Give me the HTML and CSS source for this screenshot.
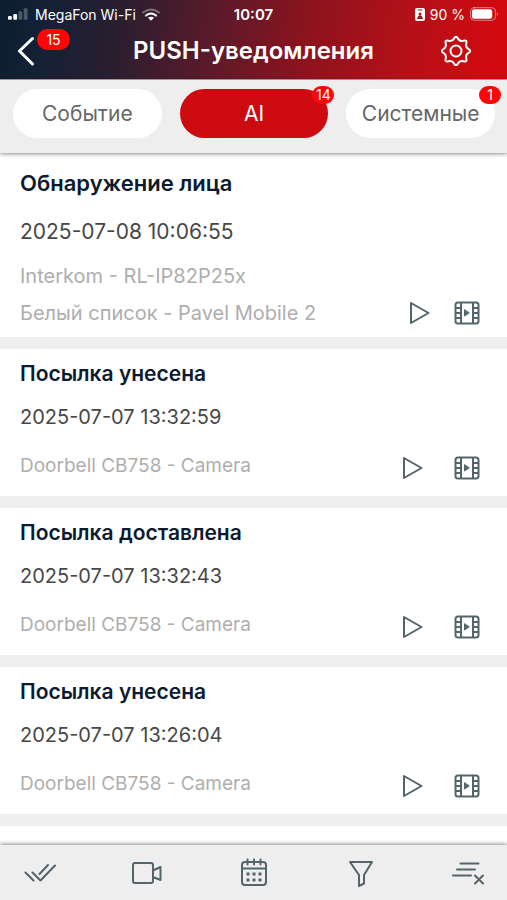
FILE: index.html
```html
<!DOCTYPE html>
<html lang="ru">
<head>
<meta charset="utf-8">
<meta name="viewport" content="width=device-width, initial-scale=1">
<title>PUSH-уведомления</title>
<link rel="stylesheet" href="styles.css">
</head>
<body>
<svg class="sprite" aria-hidden="true">
  <symbol id="play" viewBox="0 0 24 26"><path d="M3 3 20.500 13 3 23Z"/></symbol>
  <symbol id="film" viewBox="0 0 28 26">
    <rect x="2.500" y="2.500" width="23" height="21" rx="2.500"/>
    <path d="M8 3v20M20 3v20M3 8h5M3 13h5M3 18h5M20 8h5M20 13h5M20 18h5"/>
    <path class="solid" d="M11.500 10v6l4.500-3Z"/>
  </symbol>
</svg>
<header class="top">
  <div class="status">
    <div class="carrier">
      <svg class="signal" viewBox="0 0 22 12" aria-hidden="true"><rect y="8" width="4" height="4" rx="1"/><rect x="5.500" y="6" width="4" height="6" rx="1"/><rect class="dim" x="11" y="3" width="4" height="9" rx="1"/><rect class="dim" x="16.500" width="4" height="12" rx="1"/></svg>
      <span>MegaFon Wi-Fi</span>
      <svg class="wifi" viewBox="0 0 18 13" aria-hidden="true"><path class="dim" d="M1 4.500Q9-1.500 17 4.500"/><path d="M4 7.600Q9 3.500 14 7.600"/><path class="dot" d="M6 9.800Q9 7.500 12 9.800L9 12.800Z"/></svg>
    </div>
    <time class="clock">10:07</time>
    <div class="power">
      <svg class="lock" viewBox="0 0 10 13" aria-hidden="true"><rect width="10" height="13" rx="2"/><path d="M3 2h4M2.500 10.500h5"/><circle cx="5" cy="6" r="1.500"/><path class="fill" d="M2.500 10q0-2.500 2.500-2.500t2.500 2.500z"/></svg>
      <span>90 %</span>
      <svg class="battery" viewBox="0 0 30 14" aria-hidden="true"><rect class="shell" x=".5" y=".5" width="26" height="13" rx="4"/><rect x="2" y="2" width="21" height="10" rx="2.500"/><path class="tip" d="M28 5q2 2 0 4z"/></svg>
    </div>
  </div>
  <div class="bar">
    <button class="back" type="button" aria-label="Назад">
      <svg viewBox="0 0 20 30" aria-hidden="true"><path d="M16.500 2.500 3.500 15 16.500 28"/></svg>
      <span class="badge badge-back">15</span>
    </button>
    <h1>PUSH-уведомления</h1>
    <button class="settings" type="button" aria-label="Настройки">
      <svg viewBox="-15 -15 30 30" aria-hidden="true"><path d="M12.600-1.900Q16 0 12.600 1.900Q9.200 3.800 10.300 7.600Q11.300 11.300 7.600 10.300Q3.800 9.200 1.900 12.600Q0 16-1.900 12.600Q-3.800 9.200-7.600 10.300Q-11.300 11.300-10.300 7.600Q-9.200 3.800-12.600 1.900Q-16 0-12.600-1.900Q-9.200-3.800-10.300-7.600Q-11.300-11.300-7.600-10.300Q-3.800-9.200-1.900-12.600Q0-16 1.900-12.600Q3.800-9.200 7.600-10.300Q11.300-11.300 10.300-7.600Q9.200-3.800 12.600-1.900Z"/><circle r="5.500"/></svg>
    </button>
  </div>
</header>
<nav class="tabs">
  <button class="tab" type="button">Событие</button>
  <button class="tab active" type="button">AI<span class="badge badge-count">14</span></button>
  <button class="tab" type="button">Системные<span class="badge badge-count">1</span></button>
</nav>
<main class="list">
  <article class="card latest">
    <h2>Обнаружение лица</h2>
    <time>2025-07-08 10:06:55</time>
    <p>Interkom - RL-IP82P25x</p>
    <div class="source"><p>Белый список - Pavel Mobile 2</p>
      <div class="actions"><button type="button" aria-label="Воспроизвести"><svg class="play"><use href="#play"/></svg></button><button type="button" aria-label="Запись"><svg class="film"><use href="#film"/></svg></button></div></div>
  </article>
  <article class="card">
    <h2>Посылка унесена</h2>
    <time>2025-07-07 13:32:59</time>
    <div class="source"><p>Doorbell CB758 - Camera</p>
      <div class="actions"><button type="button" aria-label="Воспроизвести"><svg class="play"><use href="#play"/></svg></button><button type="button" aria-label="Запись"><svg class="film"><use href="#film"/></svg></button></div></div>
  </article>
  <article class="card">
    <h2>Посылка доставлена</h2>
    <time>2025-07-07 13:32:43</time>
    <div class="source"><p>Doorbell CB758 - Camera</p>
      <div class="actions"><button type="button" aria-label="Воспроизвести"><svg class="play"><use href="#play"/></svg></button><button type="button" aria-label="Запись"><svg class="film"><use href="#film"/></svg></button></div></div>
  </article>
  <article class="card">
    <h2>Посылка унесена</h2>
    <time>2025-07-07 13:26:04</time>
    <div class="source"><p>Doorbell CB758 - Camera</p>
      <div class="actions"><button type="button" aria-label="Воспроизвести"><svg class="play"><use href="#play"/></svg></button><button type="button" aria-label="Запись"><svg class="film"><use href="#film"/></svg></button></div></div>
  </article>
</main>
<footer class="tools">
  <button type="button" aria-label="Прочитать все"><svg viewBox="0 0 32 32"><path d="m1.500 15.500 8 8M8.500 15.500l8 8 14.500-15M15.500 17l8.500-9"/></svg></button>
  <button type="button" aria-label="Камеры"><svg viewBox="0 0 32 32"><rect x="2" y="6" width="20" height="20" rx="2"/><path d="M22 13.500 29.500 10v13L22 20Z"/></svg></button>
  <button type="button" aria-label="Календарь"><svg viewBox="0 0 32 32"><rect x="4" y="5" width="24" height="23" rx="3"/><path d="M4 11.500h24M9.500 2.500v5M16 2.500v5M22.500 2.500v5"/><path class="dots" d="M8.500 17h3M14.500 17h3M20.500 17h3M8.500 23h3M14.500 23h3M20.500 23h3"/></svg></button>
  <button type="button" aria-label="Фильтр"><svg viewBox="0 0 32 32"><path d="M5 5h22l-8 13v8.500L14 29V18Z"/></svg></button>
  <button type="button" aria-label="Очистить список"><svg viewBox="0 0 32 32"><path d="M8.500 6.500h18M5 12.500h18M1 18.500h18M23 18.500l8 8M31 18.500l-8 8"/></svg></button>
</footer>
</body>
</html>
```
FILE: styles.css
```css
* { box-sizing: border-box; }
body {
  margin: 0;
  height: 100vh;
  display: flex;
  flex-direction: column;
  overflow: hidden;
  background: #fff;
  color: #0d1b30;
  font-family: Inter, "Liberation Sans", sans-serif;
}
button {
  border: 0;
  padding: 0;
  background: none;
  color: inherit;
  font: inherit;
  cursor: pointer;
}
svg { display: block; fill: none; stroke: currentColor; stroke-width: 2; stroke-linecap: round; stroke-linejoin: round; }
h1, h2, p { margin: 0; }
.sprite { position: absolute; width: 0; height: 0; }
.solid { fill: currentColor; stroke-width: 1; }

.top {
  flex: none;
  color: #fff;
  background: linear-gradient(100deg, #0b1e31 0%, #162036 10%, #2a1e2f 24%, #5b1a2a 42%, #8c131d 60%, #b51018 80%, #d2090f 97%);
}
.status {
  display: grid;
  grid-template-columns: 1fr auto 1fr;
  align-items: center;
  height: 28px;
  padding: 0 8px;
  font-size: 14px;
}
.carrier, .power { display: flex; align-items: center; gap: 6px; }
.power { justify-content: flex-end; gap: 5px; }
.clock { font-size: 15px; font-weight: 600; }
.signal { width: 21px; height: 12px; fill: #fff; stroke: none; }
.signal .dim { opacity: .25; }
.wifi { width: 18px; height: 13px; }
.wifi .dim { opacity: .35; }
.wifi .dot { fill: #fff; stroke: none; }
.lock { width: 10px; height: 13px; fill: #fff; stroke: none; }
.lock path { stroke: #a5141b; stroke-width: 1; }
.lock circle, .lock .fill { fill: #a5141b; stroke: none; }
.battery { width: 29px; height: 14px; fill: #fff; stroke: none; }
.battery .shell { fill: none; stroke: #fff; stroke-width: 1; opacity: .5; }
.battery .tip { opacity: .5; }

.bar {
  display: grid;
  grid-template-columns: 1fr auto 1fr;
  align-items: center;
  height: 52px;
  padding: 0 16px 6px;
  border-bottom: 1px solid #b9a4ab;
}
.bar h1 { font-size: 24px; line-height: 32px; font-weight: 600; }
.back { position: relative; justify-self: start; }
.back svg { width: 20px; height: 30px; stroke-width: 3; }
.settings { justify-self: end; margin-right: 20px; }
.settings svg { width: 30px; height: 30px; }
.badge {
  position: absolute;
  border-radius: 12px;
  background: #fe0606;
  color: #fff;
  text-align: center;
}
.badge-back { left: 21px; top: -7px; width: 33px; height: 21px; font-size: 14px; line-height: 21px; }
.badge-count { right: -6px; top: -3px; width: 22px; height: 18px; font-size: 14px; line-height: 18px; }

.tabs {
  position: relative;
  z-index: 1;
  flex: none;
  display: grid;
  grid-template-columns: repeat(3, 1fr);
  gap: 18px;
  padding: 9px 12px 15px 13px;
  background: #eee;
  box-shadow: 0 1px 4px rgba(0, 0, 0, .45);
}
.tab {
  position: relative;
  height: 49px;
  border-radius: 25px;
  background: #fff;
  color: #666;
  font-size: 21px;
}
.tab.active { background: #cd0a10; color: #fff; }

.list { flex: 1; min-height: 0; overflow: hidden; }
.card {
  display: flex;
  flex-direction: column;
  padding: 9px 26px 12px 20px;
  border-bottom: 12px solid #eee;
}
.card h2 { font-size: 21px; line-height: 32px; font-weight: 600; }
.card time { margin-top: 11px; color: #474747; font-size: 20px; line-height: 32px; }
.card p { color: #aeaeae; font-size: 19px; line-height: 28px; }
.source { display: flex; justify-content: space-between; align-items: flex-start; margin-top: 19px; }
.actions { display: flex; align-items: center; height: 32px; gap: 28px; color: #53646a; }
.play { width: 24px; height: 26px; }
.film { width: 28px; height: 26px; }
.latest { padding-top: 14px; padding-bottom: 10px; }
.latest h2 { font-size: 22px; }
.latest time { margin-top: 17px; margin-bottom: 14px; font-size: 21px; }
.latest p { font-size: 20px; }
.latest .source { margin-top: 9px; }
.latest .actions { height: 28px; gap: 21px; }

.tools {
  position: relative;
  z-index: 1;
  flex: none;
  display: flex;
  justify-content: space-between;
  align-items: center;
  height: 55px;
  padding: 0 23px 0 24px;
  background: #eee;
  color: #53646a;
  box-shadow: 0 -1px 4px rgba(0, 0, 0, .45);
}
.tools svg { width: 32px; height: 32px; }
.tools .dots { stroke-width: 3; stroke-linecap: butt; }
```
